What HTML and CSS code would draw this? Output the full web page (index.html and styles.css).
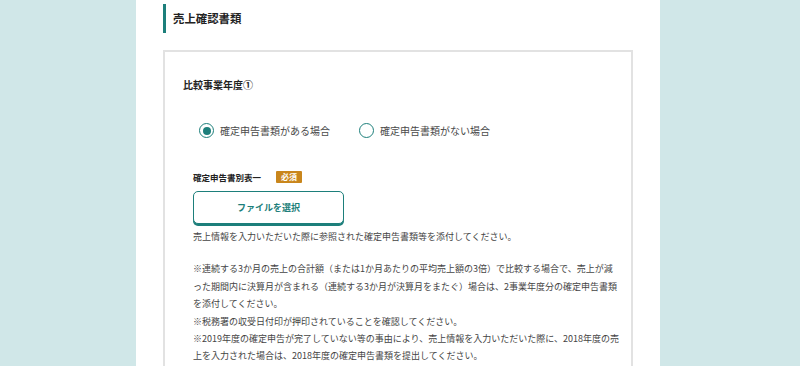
FILE: index.html
```html
<!DOCTYPE html>
<html lang="ja">
<head>
  <meta charset="UTF-8">
  <meta name="viewport" content="width=device-width, initial-scale=1.0">
  <link rel="stylesheet" href="styles.css">
</head>
<body>
  <div class="panel">
    <h2 class="section-title">売上確認書類</h2>
    <div class="card">
      <h3 class="card-title">比較事業年度①</h3>
      <div class="radio-group">
        <label class="radio"><input type="radio" name="doc" checked><span>確定申告書類がある場合</span></label>
        <label class="radio"><input type="radio" name="doc"><span>確定申告書類がない場合</span></label>
      </div>
      <div class="upload">
        <div class="upload-label">確定申告書別表一<span class="badge">必須</span></div>
        <button class="file-btn">ファイルを選択</button>
        <p class="note">売上情報を入力いただいた際に参照された確定申告書類等を添付してください。</p>
        <p class="note">※連続する3か月の売上の合計額（または1か月あたりの平均売上額の3倍）で比較する場合で、売上が減った期間内に決算月が含まれる（連続する3か月が決算月をまたぐ）場合は、2事業年度分の確定申告書類を添付してください。<br>※税務署の収受日付印が押印されていることを確認してください。<br>※2019年度の確定申告が完了していない等の事由により、売上情報を入力いただいた際に、2018年度の売上を入力された場合は、2018年度の確定申告書類を提出してください。</p>
      </div>
    </div>
  </div>
</body>
</html>
```

FILE: styles.css
```css
* {
  box-sizing: border-box;
}

body {
  margin: 0;
  background: #d0e7e8;
  font-family: "Noto Sans CJK JP", "Noto Sans", sans-serif;
  color: #333;
}

.panel {
  width: 524px;
  min-height: 366px;
  margin-left: 136px;
  padding: 4px 27px 0;
  background: #fff;
}

/* 見出し */
.section-title {
  margin: 0;
  height: 29px;
  line-height: 29px;
  padding-left: 7px;
  border-left: 3px solid #1d7f7b;
  font-size: 11.4px;
  font-weight: 700;
  color: #222;
}

.card {
  margin-top: 17px;
  border: 2px solid #e2e2e2;
  padding: 26px 12px 30px 18px;
}

.card-title {
  margin: 0;
  font-size: 10px;
  line-height: 14px;
  font-weight: 700;
  color: #222;
}

/* ラジオ */
.radio-group {
  display: flex;
  gap: 29px;
  margin: 31px 0 0 16px;
}

.radio {
  display: flex;
  align-items: center;
  gap: 6px;
  font-size: 10px;
  color: #4a4a4a;
  cursor: pointer;
}

.radio input {
  appearance: none;
  -webkit-appearance: none;
  width: 15px;
  height: 15px;
  margin: 0;
  border: 1.5px solid #1d7f7b;
  border-radius: 50%;
  display: flex;
  align-items: center;
  justify-content: center;
}

.radio input:checked::after {
  content: "";
  width: 8px;
  height: 8px;
  border-radius: 50%;
  background: #1d7f7b;
}

/* ファイル添付 */
.upload {
  margin-top: 33px;
  padding-left: 10px;
}

.upload-label {
  display: flex;
  align-items: center;
  font-size: 8.5px;
  font-weight: 700;
  line-height: 12px;
  color: #222;
}

.badge {
  margin-left: 15px;
  padding: 0 5px;
  height: 12px;
  line-height: 12px;
  background: #c9861c;
  color: #fff;
  font-size: 8px;
  font-weight: 700;
  border-radius: 1px;
}

.file-btn {
  display: block;
  width: 151px;
  height: 33px;
  margin-top: 8px;
  border: 1.5px solid #1d7f7b;
  border-radius: 5px;
  background: #fff;
  box-shadow: 0 2px 0 #1d7f7b;
  color: #1d7f7b;
  font-family: inherit;
  font-size: 9px;
  font-weight: 700;
  cursor: pointer;
}

.note {
  margin: 4px 0 15px;
  font-size: 9px;
  line-height: 17.4px;
  color: #444;
}
```
